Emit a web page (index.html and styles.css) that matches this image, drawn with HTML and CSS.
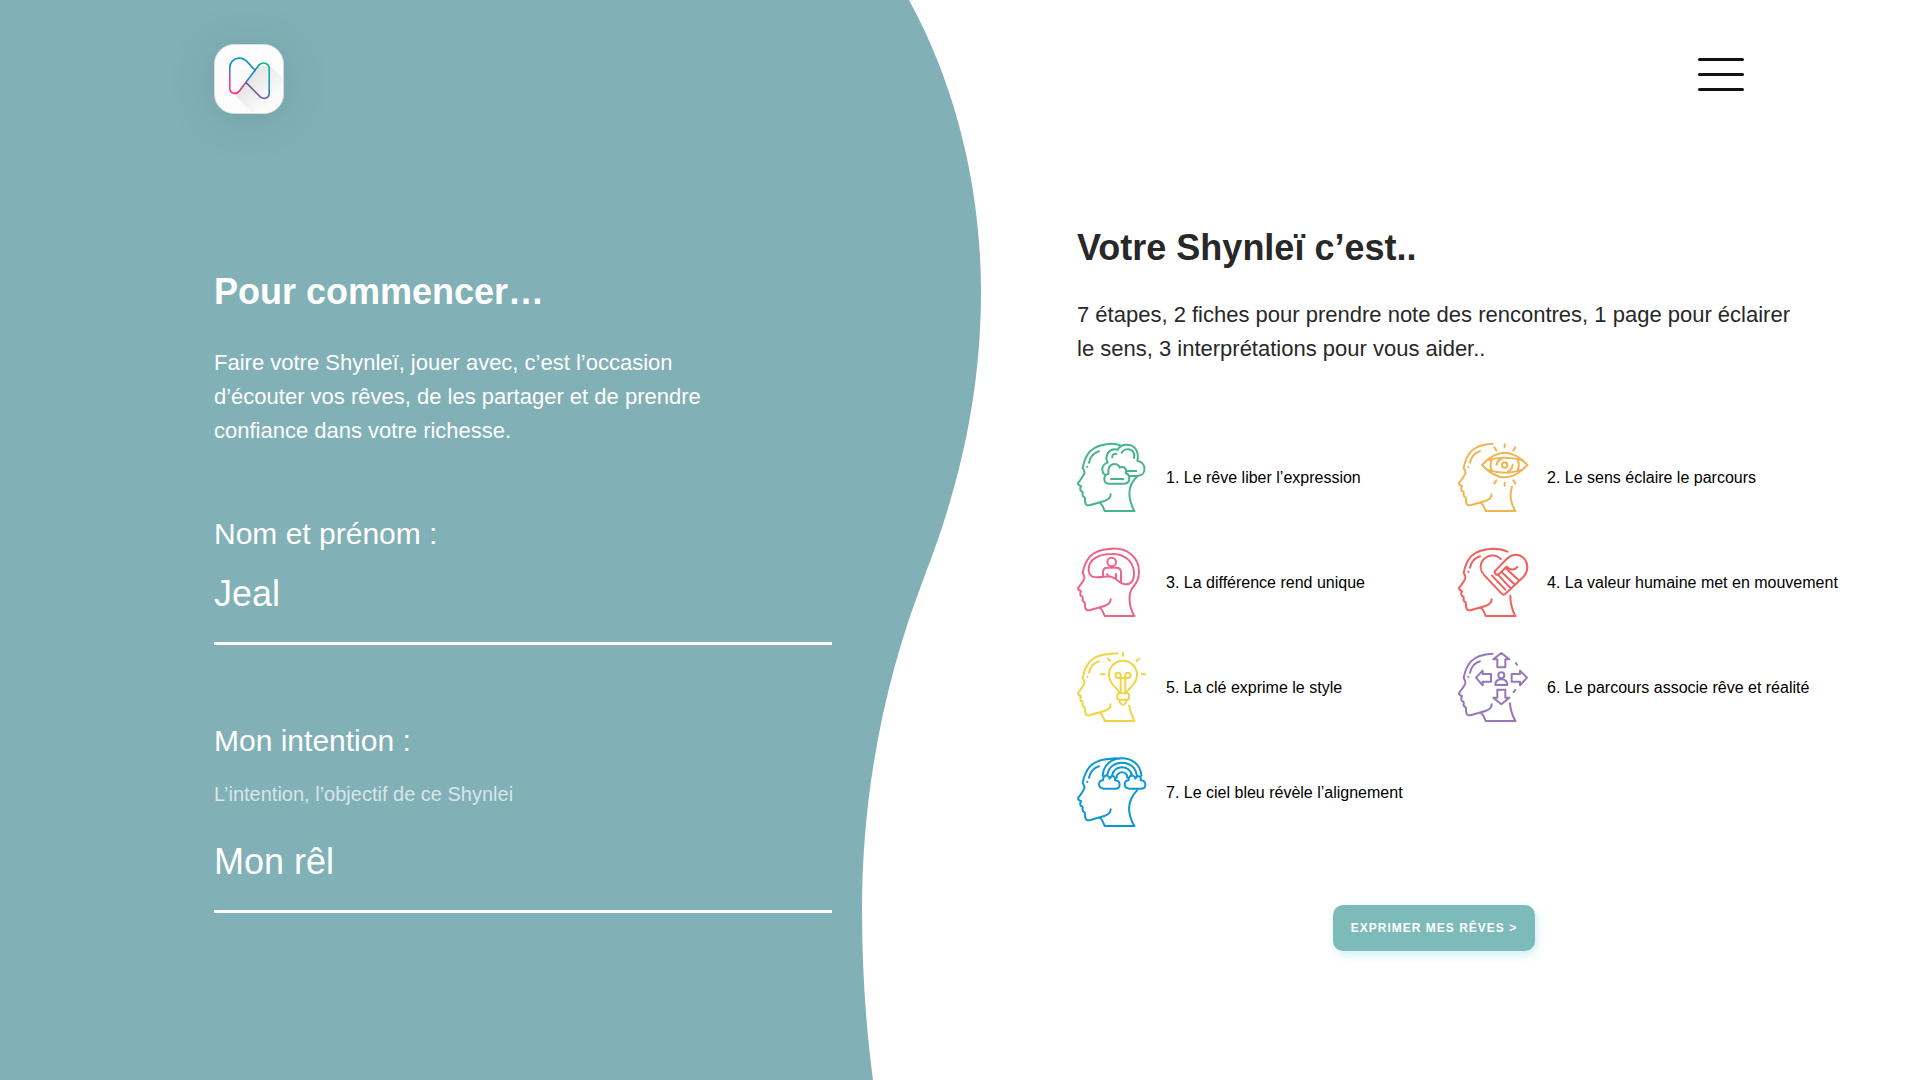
FILE: index.html
```html
<!DOCTYPE html>
<html lang="fr">
<head>
<meta charset="utf-8">
<meta name="viewport" content="width=device-width, initial-scale=1">
<title>Shynleï</title>
<link rel="stylesheet" href="styles.css">
</head>
<body>
<div class="page">
  <svg class="wave" viewBox="0 0 1920 1080" preserveAspectRatio="none" aria-hidden="true">
    <path d="M0 0H909C957 88 981 190 981 292C981 400 957 492 925 575C885 678 862 790 862 910C862 970 866 1028 873 1080H0Z"/>
  </svg>

  <header class="header">
    <a class="logo" href="#" aria-label="Accueil">
      <svg viewBox="103 73 207 207" fill="none" stroke-width="5" stroke-linejoin="round" stroke-linecap="round">
        <defs>
          <linearGradient id="loop-left" gradientUnits="userSpaceOnUse" x1="0" y1="112" x2="0" y2="220">
            <stop offset="0" stop-color="#0b9bc4"/><stop offset=".25" stop-color="#2583bb"/><stop offset=".5" stop-color="#8265b4"/><stop offset=".75" stop-color="#f14584"/><stop offset="1" stop-color="#f9336d"/>
          </linearGradient>
          <linearGradient id="loop-cross" gradientUnits="userSpaceOnUse" x1="178" y1="212" x2="240" y2="128">
            <stop offset="0" stop-color="#f9336d"/><stop offset=".3" stop-color="#7160a8"/><stop offset=".5" stop-color="#1d8fd0"/><stop offset=".8" stop-color="#128fb5"/><stop offset="1" stop-color="#0fba6b"/>
          </linearGradient>
          <linearGradient id="loop-right" gradientUnits="userSpaceOnUse" x1="0" y1="127" x2="0" y2="236">
            <stop offset="0" stop-color="#12bd66"/><stop offset=".3" stop-color="#14a9b0"/><stop offset=".6" stop-color="#1c97d6"/><stop offset="1" stop-color="#6a68b4"/>
          </linearGradient>
          <linearGradient id="loop-tail" gradientUnits="userSpaceOnUse" x1="198" y1="188" x2="240" y2="230">
            <stop offset="0" stop-color="#5b4b86"/><stop offset="1" stop-color="#8e62a8"/>
          </linearGradient>
          <linearGradient id="long-shade" gradientUnits="userSpaceOnUse" x1="205" y1="165" x2="275" y2="235">
            <stop offset="0" stop-color="#e4e4e4"/><stop offset="1" stop-color="#fafafa"/>
          </linearGradient>
        </defs>
        <path fill="url(#long-shade)" d="M232 140L268 134L311 177V281H216L160 221L198 188Z"/>
        <path fill="#fcfcfc" d="M148 205V142Q150 113 177 113Q190 113 202 125L225 150L178 212Q160 225 148 205Z"/>
        <path stroke="url(#loop-left)" d="M225 150L202 125Q190 113 177 113C160 113 148 125 148 142V205C148 222 168 225 178 212"/>
        <path stroke="url(#loop-right)" d="M238 133C250 122 268 130 268 145V220C268 235 252 240 240 230"/>
        <path stroke="url(#loop-tail)" d="M240 230L198 188"/>
        <path stroke="url(#loop-cross)" d="M178 212L232 140Q235 135 238 133"/>
      </svg>
    </a>
    <button class="menu" type="button" aria-label="Menu"><span></span><span></span><span></span></button>
  </header>

  <main class="main">
    <form class="start">
      <h1 class="title">Pour commencer…</h1>
      <p class="text">Faire votre Shynleï, jouer avec, c’est l’occasion d’écouter vos rêves, de les partager et de prendre confiance dans votre richesse.</p>
      <div class="field">
        <label class="label" for="name">Nom et prénom :</label>
        <input class="input" id="name" type="text" value="Jeal">
      </div>
      <div class="field">
        <label class="label" for="intent">Mon intention :</label>
        <p class="hint" id="intent-hint">L’intention, l’objectif de ce Shynlei</p>
        <input class="input" id="intent" type="text" value="Mon rêl" aria-describedby="intent-hint">
      </div>
    </form>

    <section class="about">
      <h2 class="title">Votre Shynleï c’est..</h2>
      <p class="text">7 étapes, 2 fiches pour prendre note des rencontres, 1 page pour éclairer le sens, 3 interprétations pour vous aider..</p>
      <svg class="symbols" aria-hidden="true">
        <defs>
          <g id="face">
            <path d="M140 41C115 42 90 48 75 64C59 82 56 98 53 113C55 120 60 122 58 130C54 140 46 150 39 159C39 165 43 167 48 168C45 175 46 181 48 183C53 184 54 187 53 190C51 196 53 199 59 202C61 208 59 213 61 218C63 226 68 227 76 225L118 213C131 209 137 203 137 193M103 218C112 222 115 233 119 243H208"/>
          </g>
          <g id="shine"><path d="M102 64C84 69 76 80 72 98M67 110V111"/></g>
        </defs>
      </svg>
      <ol class="steps">
        <li class="step green">
          <svg class="icon" viewBox="36 36 210 210"><use href="#face"/><use href="#shine"/>
            <path d="M140 41Q156 41 168 47M208 243C190 208 184 168 218 138M120 136C107 124 109 104 128 98C117 75 134 53 158 59C168 40 204 38 215 62Q221 76 217 92C246 98 246 137 216 138H194M142 82Q141 70 154 72M170 68C180 50 212 55 207 84M188 123H214M132 161Q118 161 118 147Q118 133 131 131C125 96 161 96 164 113C178 107 187 118 182 129Q193 133 193 146Q192 161 178 161ZM138 147H175"/></svg>
          <span>1. Le rêve liber l’expression</span></li>
        <li class="step orange">
          <svg class="icon" viewBox="36 36 210 210"><use href="#face"/><use href="#shine"/>
            <path d="M208 243C194 220 190 195 198 170M108 105Q176 31 244 105Q176 179 108 105ZM122 91Q176 76 230 91M122 119Q176 137 230 119M138 88Q129 105 138 123M214 88Q223 105 214 123M152 104Q154 90 167 87M200 104Q199 119 186 124M176 43V52M145 52L151 61M208 52L202 61M176 158V167M151 151L145 160M202 151L208 160"/><circle cx="176" cy="105" r="8"/></svg>
          <span>2. Le sens éclaire le parcours</span></li>
        <li class="step pink">
          <svg class="icon" viewBox="36 36 210 210"><use href="#face"/>
            <path d="M140 41C190 38 222 70 222 110C222 135 213 145 203 158C188 178 192 215 208 243M82 125Q70 118 71 100C74 70 105 57 140 57C180 56 205 80 207 112Q208 148 182 148C160 147 155 125 130 124C110 126 95 130 82 125ZM114 122V111Q114 98 127 98H154Q168 98 168 112V140M127 123V117M153 132V117"/><circle cx="140" cy="81" r="13"/></svg>
          <span>3. La différence rend unique</span></li>
        <li class="step red">
          <svg class="icon" viewBox="36 36 210 210"><use href="#face"/><use href="#shine"/>
            <path d="M140 41Q165 40 184 50M208 243C196 220 193 205 193 182M164 72C150 56 125 58 110 76C98 94 105 112 118 124L167 176Q173 182 180 175L232 126C248 108 248 84 232 68C216 54 196 58 182 72L146 109Q147 123 158 118L182 95Q200 112 214 96M138 122L178 164M155 118L192 158M166 110L205 148M178 98L218 136"/></svg>
          <span>4. La valeur humaine met en mouvement</span></li>
        <li class="step yellow">
          <svg class="icon" viewBox="36 36 210 210"><use href="#face"/><use href="#shine"/>
            <path d="M140 41L158 40M208 243C197 222 195 212 192 197M162 158C160 143 132 136 132 104A42 42 0 0 1 216 104C216 136 188 143 186 158M164 180V186Q174 202 184 186V180M167 158V107A8 8 0 1 0 160 114H188A8 8 0 1 0 181 107V158M174 38V48M128 56L135 63M222 56L215 63M108 103H119M230 103H241"/><rect x="157" y="160" width="35" height="19" rx="6"/></svg>
          <span>5. La clé exprime le style</span></li>
        <li class="step purple">
          <svg class="icon" viewBox="36 36 210 210"><use href="#face"/><use href="#shine"/>
            <path d="M208 243C197 222 193 208 192 190M166 39L190 58H178V82H154V58H142ZM166 193L142 173H154V149H178V173H190ZM90 113L110 92V102H135V125H110V136ZM243 113L222 92V102H197V125H222V136ZM148 135Q148 118 166 118Q184 118 184 135ZM210 69L213 74M208 150L203 156"/><circle cx="166" cy="106" r="9"/></svg>
          <span>6. Le parcours associe rêve et réalité</span></li>
        <li class="step blue">
          <svg class="icon" viewBox="36 36 210 210"><use href="#face"/><use href="#shine"/>
            <path d="M140 41Q150 38 164 41M208 243C188 208 184 170 216 136M113 92C118 22 224 22 229 92M127 90C133 41 209 41 215 90M141 92C147 58 195 58 201 92M155 98C155 76 187 76 187 98M116 131Q102 130 102 118Q103 106 114 106Q114 90 127 92Q133 94 134 101Q138 91 146 94Q152 98 150 106Q164 107 164 119Q164 131 150 131ZM193 131Q179 130 179 118Q180 106 191 106Q191 90 204 92Q210 94 211 101Q215 91 223 94Q229 98 227 106Q241 107 241 119Q241 131 227 131Z"/></svg>
          <span>7. Le ciel bleu révèle l’alignement</span></li>
      </ol>
      <button class="cta" type="button">EXPRIMER MES RÊVES &gt;</button>
    </section>
  </main>
</div>
</body>
</html>
```
FILE: styles.css
```css
* { box-sizing: border-box; }

body {
  margin: 0;
  background: #fff;
  color: #282828;
  font-family: "Liberation Sans", Arial, Helvetica, sans-serif;
}

.page {
  position: relative;
  min-height: 100vh;
  overflow: hidden;
}

.wave {
  position: absolute;
  inset: 0;
  z-index: -1;
  width: 100%;
  height: 100%;
  fill: #81b0b6;
}

.header {
  display: flex;
  justify-content: space-between;
  align-items: flex-start;
  padding: 44px 176px 0 214px;
}

.logo {
  width: 70px;
  height: 70px;
  border: 1px solid #d5dedf;
  border-radius: 20px;
  overflow: hidden;
  background: #fcfcfc;
  box-shadow: 0 4px 40px rgba(80, 120, 130, 0.28);
}

.logo svg {
  display: block;
  width: 100%;
  height: 100%;
}

.menu {
  display: flex;
  flex-direction: column;
  gap: 12px;
  width: 46px;
  margin-top: 14px;
  padding: 0;
  border: 0;
  background: none;
  cursor: pointer;
}

.menu span {
  width: 100%;
  height: 3px;
  border-radius: 2px;
  background: #111;
}

.main {
  display: grid;
  grid-template-columns: minmax(0, 618fr) minmax(0, 714fr);
  column-gap: 245px;
  align-items: start;
  padding: 112px 129px 80px 214px;
}

.title {
  margin: 0;
  font-size: 36px;
  line-height: 44px;
  font-weight: 700;
}

.text {
  margin: 0;
  font-size: 22px;
  line-height: 34px;
}

.start {
  padding-top: 44px;
  color: #fff;
}

.start .text {
  max-width: 500px;
  margin: 32px 0 66px;
}

.field + .field { margin-top: 76px; }

.label {
  display: block;
  font-size: 30px;
  line-height: 40px;
}

.hint {
  margin: 21px 0 16px;
  font-size: 20px;
  line-height: 24px;
  color: rgba(255, 255, 255, 0.7);
}

.input {
  display: block;
  width: 100%;
  height: 91px;
  padding: 18px 0 26px;
  border: 0;
  border-bottom: 3px solid #fff;
  border-radius: 0;
  outline: 0;
  background: none;
  color: #fff;
  font: 36px/44px "Liberation Sans", Arial, Helvetica, sans-serif;
}

.about {
  display: flex;
  flex-direction: column;
}

.about .text { margin: 28px 0 76px; }

.symbols {
  position: absolute;
  width: 0;
  height: 0;
}

.steps {
  display: grid;
  grid-template-columns: 381px 1fr;
  row-gap: 35px;
  margin: 0 0 78px;
  padding: 0;
  list-style: none;
}

.step {
  display: flex;
  align-items: center;
  gap: 19px;
  font-size: 16px;
  line-height: 24px;
  white-space: nowrap;
}

.step span {
  padding-top: 2px;
  color: #000;
}

.icon {
  flex: none;
  width: 70px;
  height: 70px;
  overflow: visible;
  fill: none;
  stroke: currentColor;
  stroke-width: 6;
  stroke-linecap: round;
  stroke-linejoin: round;
}

.green { color: #46b58c; }
.orange { color: #f0b452; }
.pink { color: #ec6588; }
.red { color: #f0605c; }
.yellow { color: #efd544; }
.purple { color: #9678b8; }
.blue { color: #0f98cf; }

.cta {
  align-self: center;
  height: 46px;
  padding: 0 18px;
  border: 0;
  border-radius: 10px;
  background: #7dbaba;
  box-shadow: 2px 4px 10px rgba(125, 210, 210, 0.35);
  color: #fff;
  font: 700 12px/16px "Liberation Sans", Arial, Helvetica, sans-serif;
  letter-spacing: 1px;
  white-space: nowrap;
  cursor: pointer;
}
```
